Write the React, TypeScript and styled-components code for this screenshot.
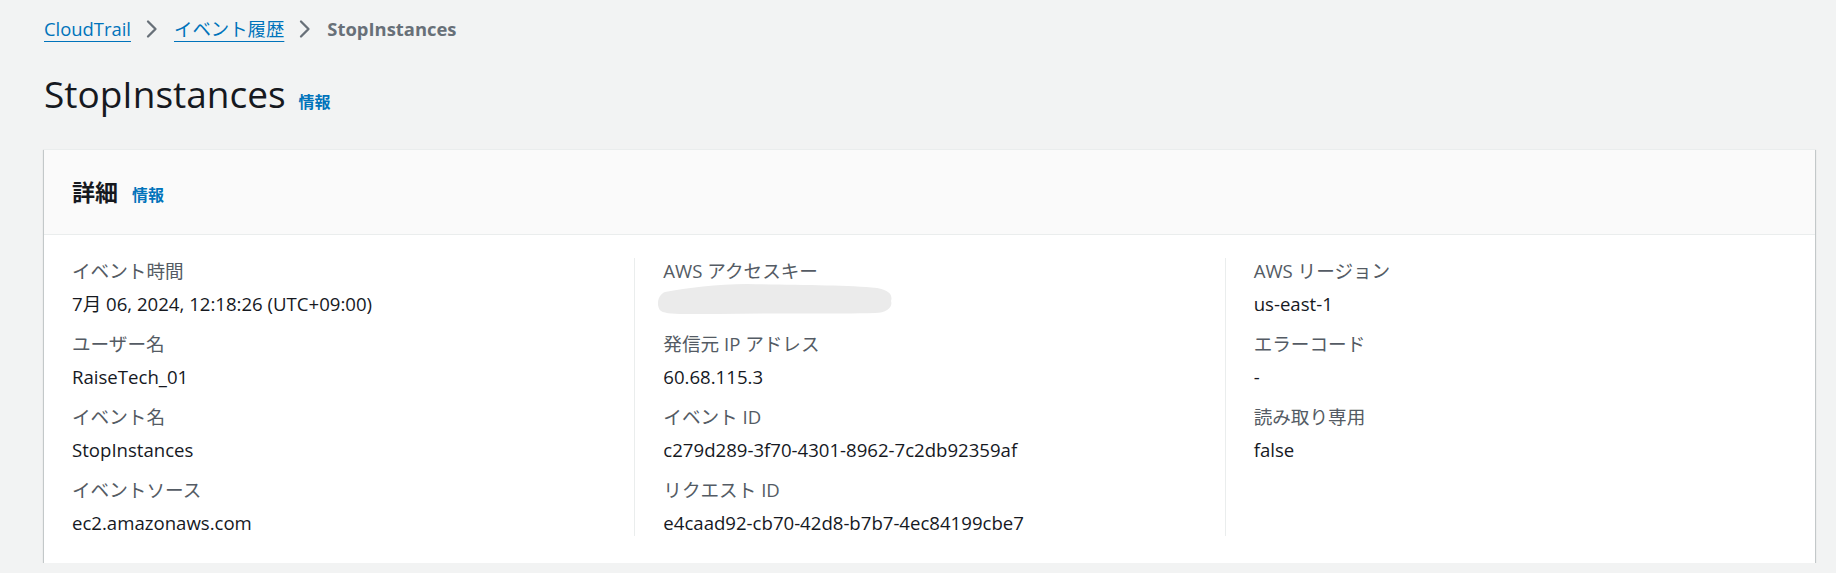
import React from "react";
import styled, { createGlobalStyle } from "styled-components";

const GlobalStyle = createGlobalStyle`
    html, body {
        margin: 0;
        padding: 0;
        background: #f2f3f3;
        color: #16191f;
        font-family: "Open Sans", "Noto Sans CJK JP", sans-serif;
    }
`;

const Page = styled.div`
    padding: 16px 21px 0 44px;
`;

const Breadcrumbs = styled.nav`
    display: flex;
    align-items: center;
    font-size: 18.4px;
    line-height: 26px;
`;

const Crumb = styled.a`
    color: #0073bb;
    text-decoration: underline;
    text-underline-offset: 5px;
    text-decoration-thickness: 1px;
`;

const CurrentCrumb = styled.span`
    color: #687078;
    font-weight: 700;
`;

const Chevron = styled.svg`
    width: 20px;
    height: 20px;
    margin: 0 12px 0 11px;
    flex: none;
`;

const TitleRow = styled.div`
    display: flex;
    align-items: baseline;
    gap: 13px;
    margin-top: 30px;
`;

const Title = styled.h1`
    margin: 0;
    font-size: 37px;
    line-height: 44px;
    font-weight: 400;
    color: #16191f;
`;

const Info = styled.a<{ $size?: number }>`
    color: #0073bb;
    font-weight: 700;
    font-size: ${(p) => p.$size ?? 16}px;
    text-decoration: none;
`;

const Card = styled.section`
    margin-top: 33px;
    background: #fff;
    border-top: 1px solid #eaeded;
    box-shadow: 0 1px 1px 0 rgba(0, 28, 36, 0.3), 1px 1px 1px 0 rgba(0, 28, 36, 0.15),
        -1px 1px 1px 0 rgba(0, 28, 36, 0.15);
`;

const CardHeader = styled.header`
    height: 84px;
    display: flex;
    align-items: center;
    padding: 0 28px;
    background: #fafafa;
    border-bottom: 1px solid #eaeded;
`;

const HeaderRow = styled.div`
    display: flex;
    align-items: baseline;
    gap: 14px;
`;

const CardTitle = styled.h2`
    margin: 0;
    font-size: 23px;
    line-height: 30px;
    font-weight: 700;
    color: #16191f;
`;

const CardBody = styled.div`
    display: grid;
    grid-template-columns: repeat(3, 1fr);
    padding: 23px 0 27px;
`;

const Column = styled.div<{ $divider?: boolean }>`
    display: flex;
    flex-direction: column;
    gap: 14px;
    padding-left: 28px;
    border-left: ${(p) => (p.$divider ? "1px solid #eaeded" : "none")};
    font-size: 18.6px;
    line-height: 26px;
`;

const Pair = styled.div`
    display: flex;
    flex-direction: column;
`;

const Label = styled.div`
    color: #545b64;
`;

const Value = styled.div`
    margin-top: 7px;
    color: #16191f;
    height: 26px;
`;

const Redacted = styled.svg`
    display: block;
    width: 236px;
    height: 32px;
    margin: -8px 0 -2px -6px;
`;

const ChevronIcon = () => (
    <Chevron viewBox="0 0 20 20" fill="none" stroke="#687078" strokeWidth="2.3" strokeLinecap="round" strokeLinejoin="round">
        <path d="M6 2.5 13.5 10 6 17.5" />
    </Chevron>
);

const RedactedBlob = () => (
    <Redacted viewBox="0 0 236 32">
        <path
            d="M8 9 C30 5 60 1 90 1 C140 2 190 2 220 5 C232 7 236 12 234 18 C236 24 230 30 218 30 C180 31 120 30 60 31 C30 31 10 32 4 28 C-1 24 0 12 8 9 Z"
            fill="#ebebeb"
        />
    </Redacted>
);

type Item = { label: string; value: React.ReactNode };

const columns: Item[][] = [
    [
        { label: "イベント時間", value: "7月 06, 2024, 12:18:26 (UTC+09:00)" },
        { label: "ユーザー名", value: "RaiseTech_01" },
        { label: "イベント名", value: "StopInstances" },
        { label: "イベントソース", value: "ec2.amazonaws.com" },
    ],
    [
        { label: "AWS アクセスキー", value: <RedactedBlob /> },
        { label: "発信元 IP アドレス", value: "60.68.115.3" },
        { label: "イベント ID", value: "c279d289-3f70-4301-8962-7c2db92359af" },
        { label: "リクエスト ID", value: "e4caad92-cb70-42d8-b7b7-4ec84199cbe7" },
    ],
    [
        { label: "AWS リージョン", value: "us-east-1" },
        { label: "エラーコード", value: "-" },
        { label: "読み取り専用", value: "false" },
    ],
];

export default function App() {
    return (
        <>
            <GlobalStyle />
            <Page>
                <Breadcrumbs>
                    <Crumb href="#">CloudTrail</Crumb>
                    <ChevronIcon />
                    <Crumb href="#">イベント履歴</Crumb>
                    <ChevronIcon />
                    <CurrentCrumb>StopInstances</CurrentCrumb>
                </Breadcrumbs>

                <TitleRow>
                    <Title>StopInstances</Title>
                    <Info href="#">情報</Info>
                </TitleRow>

                <Card>
                    <CardHeader>
                        <HeaderRow>
                            <CardTitle>詳細</CardTitle>
                            <Info href="#">情報</Info>
                        </HeaderRow>
                    </CardHeader>
                    <CardBody>
                        {columns.map((col, i) => (
                            <Column key={i} $divider={i > 0}>
                                {col.map((item) => (
                                    <Pair key={item.label}>
                                        <Label>{item.label}</Label>
                                        <Value>{item.value}</Value>
                                    </Pair>
                                ))}
                            </Column>
                        ))}
                    </CardBody>
                </Card>
            </Page>
        </>
    );
}
